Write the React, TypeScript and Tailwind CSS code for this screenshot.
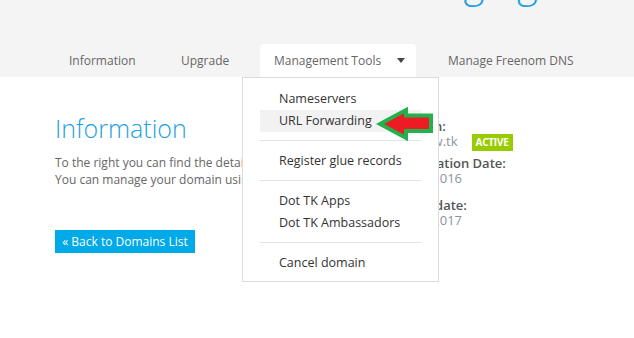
import { Fragment } from 'react';

const tabs = [
  { label: 'Information', width: 'w-[94px]' },
  { label: 'Upgrade', width: 'w-[75px]' },
  { label: 'Management Tools', width: 'w-[156px]', active: true },
  { label: 'Manage Freenom DNS', width: 'w-[155px]' },
];

const menuGroups = [
  ['Nameservers', 'URL Forwarding'],
  ['Register glue records'],
  ['Dot TK Apps', 'Dot TK Ambassadors'],
  ['Cancel domain'],
];

function PointerArrow() {
  return (
    <svg width="60" height="37" viewBox="0 0 60 37" className="absolute left-[116px] -top-[4px]">
      <polygon
        points="4,18 30,4 30,9.5 55,9.5 55,25 30,25 30,32"
        fill="#ed1c24"
        stroke="#22b14c"
        strokeWidth="4"
        strokeLinejoin="miter"
      />
    </svg>
  );
}

function ToolsMenu() {
  return (
    <div className="absolute top-full -left-[18px] w-[197px] bg-white border border-[#dcdcdc] pt-[10px] pb-[7px] z-10">
      {menuGroups.map((group, gi) => (
        <Fragment key={gi}>
          {gi > 0 && <div className="mx-[17px] h-px bg-[#e3e3e3] mt-[8px] mb-[9px]" />}
          {group.map((item) => (
            <div
              key={item}
              className={`relative mx-[17px] h-[22px] pl-[19px] flex items-center text-[12.5px] text-[#333] ${
                item === 'URL Forwarding' ? 'bg-[#f2f2f2]' : ''
              }`}
            >
              {item}
              {item === 'URL Forwarding' && <PointerArrow />}
            </div>
          ))}
        </Fragment>
      ))}
    </div>
  );
}

export default function App() {
  return (
    <div className="w-[634px] h-[338px] bg-white overflow-hidden font-['Open_Sans',sans-serif]">
      {/* Header with clipped title + tabs */}
      <header className="bg-[#f4f4f4] h-[77px] flex flex-col">
        <div className="h-[8px] overflow-hidden">
          <div className="pl-[363px] -mt-[42px] text-[40px] leading-[48px] font-light text-[#1da1e2] whitespace-nowrap">
            Managing
          </div>
        </div>
        <nav className="mt-auto flex h-[33px] pl-[55px] gap-[18px]">
          {tabs.map((t) => (
            <div
              key={t.label}
              className={`relative ${t.width} pl-[14px] flex items-center text-[12px] text-[#666] whitespace-nowrap ${
                t.active ? 'bg-white rounded-t-[4px]' : ''
              }`}
            >
              {t.label}
              {t.active && (
                <>
                  <span className="ml-[16px] w-0 h-0 border-l-[4px] border-r-[4px] border-t-[5px] border-l-transparent border-r-transparent border-t-[#444]" />
                  <ToolsMenu />
                </>
              )}
            </div>
          ))}
        </nav>
      </header>

      {/* Content */}
      <main className="flex">
        <section className="w-[338px] pl-[55px] pt-[36px] shrink-0">
          <h2 className="text-[25px] leading-[30px] font-light text-[#1da1e2]">Information</h2>
          <p className="mt-[11px] text-[12px] leading-[17px] text-[#666] whitespace-nowrap">
            To the right you can find the details of your domain.
            <br />
            You can manage your domain using the tabs above.
          </p>
          <button className="mt-[42px] h-[23px] w-[140px] bg-[#00a9e8] text-white text-[12px] flex items-center justify-center">
            « Back to Domains List
          </button>
        </section>

        <section className="pl-[55px] pt-[42px] text-[13px]">
          <div className="leading-[15px] font-semibold text-[#555]">Domain:</div>
          <div className="flex items-center gap-[14px] h-[16px]">
            <span className="text-[#8b93a0]">freenew.tk</span>
            <span className="h-[17px] px-[4px] bg-[#99cc00] text-white text-[10px] font-bold flex items-center tracking-tight">
              ACTIVE
            </span>
          </div>
          <div className="mt-[6px] leading-[15px] font-semibold text-[#555]">Registration Date:</div>
          <div className="leading-[15px] text-[#8b93a0]">21/11/2016</div>
          <div className="mt-[12px] leading-[15px] font-semibold text-[#555]">Expiry date:</div>
          <div className="leading-[15px] text-[#8b93a0]">21/11/2017</div>
        </section>
      </main>
    </div>
  );
}
